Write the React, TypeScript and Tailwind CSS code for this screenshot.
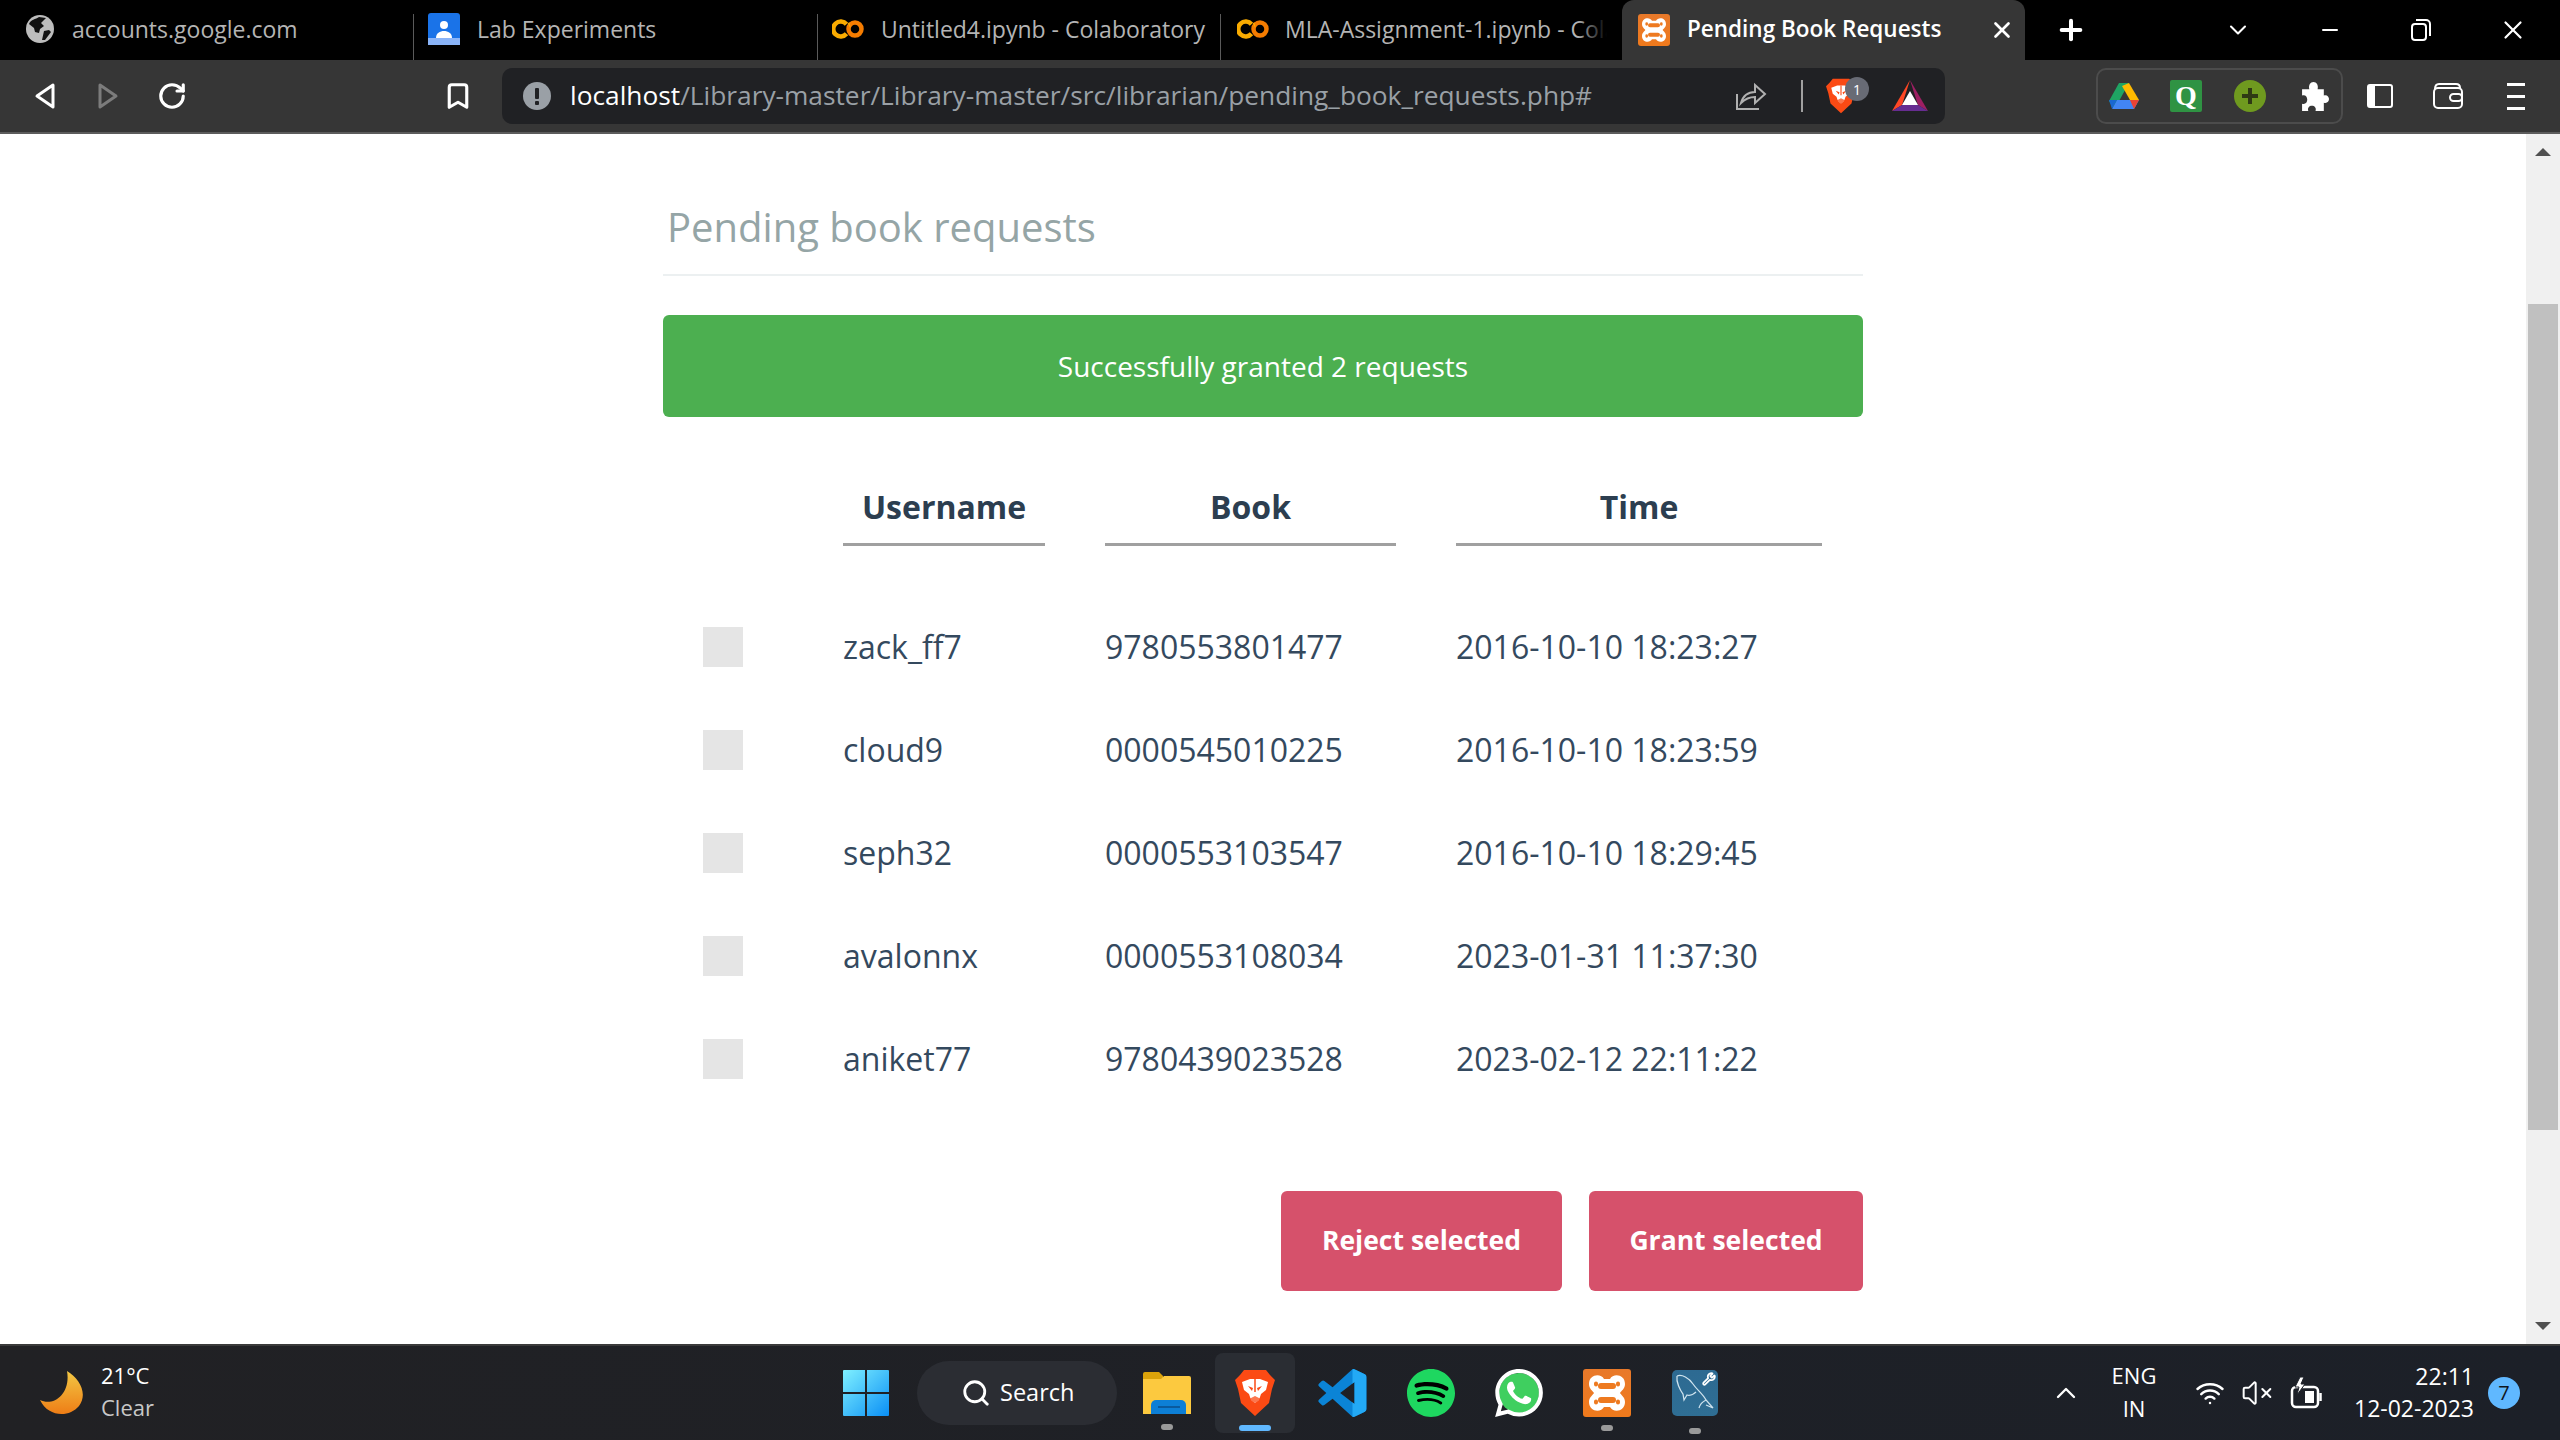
import { Bookmark, ChevronDown, ChevronUp, Minus, Plus, RotateCw, Search, VolumeX, Wifi, Wrench, X } from 'lucide-react';
import { SiSpotify, SiWhatsapp } from 'react-icons/si';

const requests = [
  { user: 'zack_ff7', book: '9780553801477', time: '2016-10-10 18:23:27' },
  { user: 'cloud9', book: '0000545010225', time: '2016-10-10 18:23:59' },
  { user: 'seph32', book: '0000553103547', time: '2016-10-10 18:29:45' },
  { user: 'avalonnx', book: '0000553108034', time: '2023-01-31 11:37:30' },
  { user: 'aniket77', book: '9780439023528', time: '2023-02-12 22:11:22' },
];

function ColabIcon() {
  return (
    <svg width="32" height="20" viewBox="0 0 32 20" fill="none" className="shrink-0">
      <circle cx="23" cy="10" r="6.5" stroke="#f57c00" strokeWidth="4.5" />
      <path d="M14.5 5.2A7.5 7.5 0 1 0 14.5 14.8" stroke="#f9ab00" strokeWidth="4.5" />
      <path d="M16.8 6.2A6.5 6.5 0 0 1 18 5.8" stroke="#f9ab00" strokeWidth="4.5" />
    </svg>
  );
}

function XamppTile({ size }: { size: number }) {
  return (
    <div
      className="shrink-0 rounded-[3px] bg-gradient-to-b from-[#e8792a] to-[#f07a1c]"
      style={{ width: size, height: size }}
    >
      <svg viewBox="0 0 48 48" className="w-full h-full" fill="none">
        <path
          d="M6 15C6 5 18 4 21 10H27C30 4 42 5 42 15C42 20 38 22 37 24C38 26 42 28 42 33C42 43 30 44 27 38H21C18 44 6 43 6 33C6 28 10 26 11 24C10 22 6 20 6 15Z"
          fill="#fff"
        />
        <path d="M18 17H30M18 31H30" stroke="#ee7a20" strokeWidth="6" strokeLinecap="round" />
        <path d="M13 14.5V15.5M35 14.5V15.5M13 32.5V33.5M35 32.5V33.5" stroke="#ee7a20" strokeWidth="4" strokeLinecap="round" />
      </svg>
    </div>
  );
}

function BraveIcon({ w, h }: { w: number; h: number }) {
  return (
    <div className="relative shrink-0" style={{ width: w, height: h }}>
      <svg viewBox="0 0 40 48" className="absolute inset-0 w-full h-full">
        <path d="M9 1h22l4 5 5 5-3 9-3 14-14 13L6 34 3 20 0 11l5-5z" fill="#fb4a14" />
        <path d="M7 13l8-3h10l8 3-2 8-5 4-2 6-4 3-4-3-2-6-5-4z" fill="#fff" />
        <path d="M13 17l5 2-1 3zM27 17l-5 2 1 3z" fill="#fb4a14" />
        <path d="M19 10h2v13h-2zM14 30l6-3 6 3-6 4z" fill="#fb4a14" opacity="0.75" />
      </svg>
    </div>
  );
}

function Tab({ icon, label, width }: { icon: React.ReactNode; label: string; width: string }) {
  return (
    <div className={`flex items-center h-full pb-[2px] overflow-hidden whitespace-nowrap text-[23px] text-[#b4b4b4] ${width}`}>
      {icon}
      <span>{label}</span>
    </div>
  );
}

function TabSeparator() {
  return <div className="w-px h-[46px] self-end bg-[#5a5a5a] shrink-0" />;
}

function TabStrip() {
  return (
    <div className="h-[60px] bg-black flex items-stretch shrink-0">
      <Tab
        width="w-[413px] pl-[26px]"
        label="accounts.google.com"
        icon={
          <svg width="28" height="28" viewBox="0 0 28 28" className="shrink-0 mr-[18px]">
            <circle cx="14" cy="14" r="14" fill="#bdbdbd" />
            <path d="M13 2c-3 2-9 3-10 7l5 4 1 4 4 1 1-4 4-3-3-3 5-5zM18 16l5-1 2 2-6 8-3 0z" fill="#111" />
          </svg>
        }
      />
      <TabSeparator />
      <Tab
        width="w-[403px] pl-[14px]"
        label="Lab Experiments"
        icon={
          <svg width="32" height="32" viewBox="0 0 32 32" className="shrink-0 mr-[17px]">
            <rect width="32" height="32" rx="3" fill="#1a73e8" />
            <rect y="25" width="32" height="7" fill="#8ab4f8" />
            <circle cx="16" cy="12" r="4" fill="#fff" />
            <path d="M8 25c0-5 4-7 8-7s8 2 8 7z" fill="#fff" />
          </svg>
        }
      />
      <TabSeparator />
      <Tab width="w-[402px] pl-[14px]" label="Untitled4.ipynb - Colaboratory" icon={<div className="mr-[17px]"><ColabIcon /></div>} />
      <TabSeparator />
      <div className="relative w-[401px] h-full">
        <Tab width="w-[386px] pl-[16px]" label="MLA-Assignment-1.ipynb - Colaboratory" icon={<div className="mr-[16px]"><ColabIcon /></div>} />
        <div className="absolute right-[15px] top-0 h-full w-[30px] bg-gradient-to-r from-transparent to-black" />
      </div>
      <div className="w-[403px] h-full bg-[#363636] rounded-t-[12px] flex items-center pl-[16px] whitespace-nowrap text-[22.5px] font-semibold text-white">
        <XamppTile size={32} />
        <span className="ml-[17px] pb-[2px]">Pending Book Requests</span>
        <X className="ml-auto mr-[10px] text-white" size={26} strokeWidth={2.5} />
      </div>
      <div className="flex-1 flex items-center text-white">
        <Plus className="ml-[30px]" size={32} strokeWidth={3} />
        <ChevronDown className="ml-[137px]" size={28} strokeWidth={1.75} />
        <Minus className="ml-[66px]" size={24} strokeWidth={2} />
        <svg width="24" height="24" viewBox="0 0 24 24" fill="none" stroke="#fff" strokeWidth="2" className="ml-[67px]">
          <rect x="3" y="6" width="14" height="16" rx="3" />
          <path d="M7 2h10a4 4 0 0 1 4 4v12" />
        </svg>
        <X className="ml-[65px]" size={30} strokeWidth={1.75} />
      </div>
    </div>
  );
}

function Toolbar() {
  return (
    <div className="h-[74px] bg-[#363636] border-b-2 border-[#5c5c5c] flex items-center shrink-0">
      <svg width="22" height="28" viewBox="0 0 22 28" fill="none" stroke="#fff" strokeWidth="3" strokeLinejoin="round" className="ml-[34px]">
        <path d="M19 3v22L3 14z" />
      </svg>
      <svg width="22" height="28" viewBox="0 0 22 28" fill="none" stroke="#7c7c7c" strokeWidth="3" strokeLinejoin="round" className="ml-[41px]">
        <path d="M3 3v22l16-11z" />
      </svg>
      <RotateCw className="ml-[38px] text-white" size={30} strokeWidth={2.5} />
      <Bookmark className="ml-[256px] text-white" size={30} strokeWidth={2.5} />
      <div className="ml-[29px] w-[1443px] h-[56px] rounded-[10px] bg-[#202124] flex items-center pl-[21px]">
        <svg width="28" height="28" viewBox="0 0 28 28" className="shrink-0">
          <circle cx="14" cy="14" r="14" fill="#9aa0a6" />
          <rect x="12" y="6" width="4" height="11" rx="1" fill="#202124" />
          <rect x="12" y="19" width="4" height="4" rx="1" fill="#202124" />
        </svg>
        <div className="ml-[19px] text-[26.3px] text-[#9aa0a6] whitespace-nowrap">
          <span className="text-white">localhost</span>/Library-master/Library-master/src/librarian/pending_book_requests.php#
        </div>
        <svg width="32" height="30" viewBox="0 0 32 30" fill="none" stroke="#b0b0b0" strokeWidth="2" className="ml-auto shrink-0">
          <path d="M2 13v15h22" />
          <path d="M6 22c2-7 7-11 14-11V4l10 9-10 9v-6c-6 0-10 2-14 6z" />
        </svg>
        <div className="ml-[34px] w-[2px] h-[32px] bg-[#a0a0a0] shrink-0" />
        <div className="relative ml-[23px] shrink-0">
          <BraveIcon w={30} h={36} />
          <div className="absolute left-[19px] top-[-1px] w-[24px] h-[24px] rounded-full bg-[#686b75] text-white text-[14px] flex items-center justify-center">1</div>
        </div>
        <svg width="36" height="32" viewBox="0 0 36 32" className="ml-[36px] mr-[17px] shrink-0">
          <path d="M18 0L0 31l10-6z" fill="#ff4724" />
          <path d="M18 0l18 31-10-6z" fill="#9e1f63" />
          <path d="M0 31h36l-10-6H10z" fill="#662d91" />
          <path d="M18 11L10 25h16z" fill="#fff" />
        </svg>
      </div>
      <div className="ml-[151px] w-[247px] h-[56px] rounded-[10px] border-2 border-[#4c4c4c] flex items-center shrink-0">
        <svg width="30" height="26" viewBox="0 0 30 26" className="ml-[11px]">
          <path d="M10 0h10L10 18 5 26 0 18z" fill="#1fa463" />
          <path d="M20 0l10 17h-9L13 3z" fill="#ffba00" />
          <path d="M8 17h22l-5 9H3z" fill="#4285f4" />
          <path d="M0 17h8l-5 9z" fill="#1967d2" />
          <path d="M21 17h9l-5 9z" fill="#ea4335" />
        </svg>
        <div className="ml-[31px] w-[32px] h-[32px] rounded-[2px] bg-[#2f9343] text-white text-[28px] font-bold flex items-center justify-center" style={{ fontFamily: 'Liberation Serif, serif' }}>Q</div>
        <svg width="32" height="32" viewBox="0 0 32 32" className="ml-[32px]">
          <circle cx="16" cy="16" r="16" fill="#6f9a1f" />
          <path d="M14 8h4v6h6v4h-6v6h-4v-6H8v-4h6z" fill="#2f3a14" />
        </svg>
        <svg width="29" height="29" viewBox="0 0 28 28" className="ml-[34px]">
          <path d="M2 7H9C8 3 10 0 13 0S18 3 17 7H23V13C26 12 28 14 28 16.5S26 21 23 20V28H15C16 25 14 23 11.5 23S7 25 8 28H2V21C5 22 7 20 7 17S5 12 2 13Z" fill="#fff" />
        </svg>
      </div>
      <svg width="26" height="24" viewBox="0 0 26 24" fill="none" className="ml-[24px] shrink-0">
        <rect x="1" y="1" width="24" height="22" rx="2" stroke="#fff" strokeWidth="2" />
        <rect x="1" y="1" width="7" height="22" fill="#fff" />
      </svg>
      <svg width="30" height="26" viewBox="0 0 30 26" fill="none" stroke="#fff" strokeWidth="2" className="ml-[40px] shrink-0">
        <path d="M2 6c0-3 1-5 4-5h17c3 0 4 1 4 4" />
        <rect x="1" y="5" width="28" height="20" rx="4" />
        <rect x="17" y="11" width="12" height="7" rx="3.5" />
      </svg>
      <div className="ml-[44px] flex flex-col gap-[9px] shrink-0">
        <div className="w-[18px] h-[3px] bg-white" />
        <div className="w-[18px] h-[3px] bg-white" />
        <div className="w-[18px] h-[3px] bg-white" />
      </div>
    </div>
  );
}

function Scrollbar() {
  return (
    <div className="w-[34px] bg-[#f0f0f0] flex flex-col items-center shrink-0">
      <div className="mt-[14px] w-0 h-0 border-x-[8px] border-x-transparent border-b-[8px] border-b-[#505050]" />
      <div className="mt-[148px] w-[30px] h-[826px] bg-[#c0c0c0]" />
      <div className="mt-[192px] w-0 h-0 border-x-[8px] border-x-transparent border-t-[8px] border-t-[#505050]" />
    </div>
  );
}

function RequestsPage() {
  return (
    <div className="flex-1 bg-white flex min-h-0" style={{ fontFamily: '"Open Sans", sans-serif' }}>
      <main className="flex-1 min-w-0">
        <div className="w-[1200px] mx-auto pt-[65px]">
          <h1 className="pl-[4px] pb-[19px] border-b-2 border-[#ecf0f1] text-[40px] leading-[56px] font-normal text-[#95a5a6]">
            Pending book requests
          </h1>

          <div className="mt-[39px] h-[102px] rounded-[6px] bg-[#4caf50] flex items-center justify-center text-[28px] text-white">
            Successfully granted 2 requests
          </div>

          <div className="mt-[62px] grid grid-cols-[120px_202px_291px_366px] gap-x-[60px] text-[32px] text-[#34495e]">
            <div />
            <div className="pb-[8px] border-b-[3px] border-[#a0a0a0] text-center font-bold text-[#2c3e50] leading-[56px]">Username</div>
            <div className="pb-[8px] border-b-[3px] border-[#a0a0a0] text-center font-bold text-[#2c3e50] leading-[56px]">Book</div>
            <div className="pb-[8px] border-b-[3px] border-[#a0a0a0] text-center font-bold text-[#2c3e50] leading-[56px]">Time</div>
            <div className="col-span-4 h-[49px]" />
            {requests.map((r) => (
              <div key={r.user} className="contents">
                <div className="h-[103px] flex items-center">
                  <div className="ml-[40px] w-[40px] h-[40px] bg-[#e5e5e5]" />
                </div>
                <div className="h-[103px] flex items-center">{r.user}</div>
                <div className="h-[103px] flex items-center">{r.book}</div>
                <div className="h-[103px] flex items-center">{r.time}</div>
              </div>
            ))}
          </div>

          <div className="mt-[81px] flex justify-end gap-[27px]">
            <button className="w-[281px] h-[100px] rounded-[6px] bg-[#d6516b] text-white text-[26.5px] font-bold">Reject selected</button>
            <button className="w-[274px] h-[100px] rounded-[6px] bg-[#d6516b] text-white text-[26.5px] font-bold">Grant selected</button>
          </div>
        </div>
      </main>
      <Scrollbar />
    </div>
  );
}

function Dot() {
  return <div className="w-[12px] h-[6px] rounded-full bg-[#9a9a9a]" />;
}

function Taskbar() {
  return (
    <div className="h-[96px] shrink-0 border-t-2 border-[#3a3a3a] bg-gradient-to-r from-[#212124] to-[#1c2028] flex items-center text-white text-[22px]" style={{ fontFamily: '"Open Sans", sans-serif' }}>
      <svg width="44" height="44" viewBox="0 0 44 44" className="ml-[40px] shrink-0">
        <defs>
          <linearGradient id="moon" x1="0" y1="0" x2="0" y2="1">
            <stop offset="0" stopColor="#f3c844" />
            <stop offset="1" stopColor="#ee7d16" />
          </linearGradient>
        </defs>
        <path d="M27 0c13 8 21 23 12 35C29 47 8 46 0 29c14 7 31-7 27-29z" fill="url(#moon)" />
      </svg>
      <div className="ml-[17px] w-[100px] -mt-[4px] leading-[32px] shrink-0">
        <div>21°C</div>
        <div className="text-[#c8c8c8]">Clear</div>
      </div>
      <svg width="46" height="46" viewBox="0 0 46 46" className="ml-[642px] shrink-0">
        <defs>
          <linearGradient id="win" x1="0" y1="0" x2="1" y2="1">
            <stop offset="0" stopColor="#7ff0ff" />
            <stop offset="1" stopColor="#0a8ff5" />
          </linearGradient>
        </defs>
        <path d="M0 1a1 1 0 0 1 1-1h21v22H0zM24 0h21a1 1 0 0 1 1 1v21H24zM0 24h22v22H1a1 1 0 0 1-1-1zM24 24h22v21a1 1 0 0 1-1 1H24z" fill="url(#win)" />
      </svg>
      <div className="ml-[28px] w-[200px] h-[64px] rounded-full bg-[#2b2d33] flex items-center pl-[44px] shrink-0 text-[23.5px]">
        <Search size={30} strokeWidth={2.25} className="shrink-0" />
        <span className="ml-[9px]">Search</span>
      </div>
      <div className="relative ml-[26px] w-[48px] h-[42px] shrink-0">
        <svg width="48" height="42" viewBox="0 0 48 42" className="absolute inset-0">
          <path d="M0 2a2 2 0 0 1 2-2h14l4 4v6H0z" fill="#dba30b" />
          <path d="M0 7l18 0 3-3h25a2 2 0 0 1 2 2v36H0z" fill="#fcc93f" />
          <path d="M8 42V33a5 5 0 0 1 5-5h25a5 5 0 0 1 5 5v9z" fill="#0d7fd6" />
          <rect x="15" y="34" width="22" height="2" fill="#0a5a9e" />
        </svg>
        <div className="absolute left-[18px] top-[52px]"><Dot /></div>
      </div>
      <div className="ml-[24px] w-[80px] h-[80px] rounded-[8px] bg-[#2a2d33] flex flex-col items-center shrink-0">
        <div className="mt-[16px]"><BraveIcon w={40} h={48} /></div>
        <div className="mt-[8px] w-[32px] h-[6px] rounded-full bg-[#60b8ff]" />
      </div>
      <svg width="49" height="48" viewBox="0 0 24 24" className="ml-[23px] shrink-0">
        <defs>
          <clipPath id="codeRight"><rect x="17" y="0" width="7" height="24" /></clipPath>
        </defs>
        <path d="M23.15 2.587 18.21.21a1.494 1.494 0 0 0-1.705.29l-9.46 8.63-4.12-3.128a.999.999 0 0 0-1.276.057L.327 7.261A1 1 0 0 0 .326 8.74L3.899 12 .326 15.26a1 1 0 0 0 .001 1.479L1.65 17.94a.999.999 0 0 0 1.276.057l4.12-3.128 9.46 8.63a1.492 1.492 0 0 0 1.704.29l4.942-2.377A1.5 1.5 0 0 0 24 20.06V3.939a1.5 1.5 0 0 0-.85-1.352zm-5.146 14.861L10.826 12l7.178-5.448v10.896z" fill="#0b84d6" />
        <path d="M23.15 2.587 18.21.21a1.494 1.494 0 0 0-1.705.29l-9.46 8.63-4.12-3.128a.999.999 0 0 0-1.276.057L.327 7.261A1 1 0 0 0 .326 8.74L3.899 12 .326 15.26a1 1 0 0 0 .001 1.479L1.65 17.94a.999.999 0 0 0 1.276.057l4.12-3.128 9.46 8.63a1.492 1.492 0 0 0 1.704.29l4.942-2.377A1.5 1.5 0 0 0 24 20.06V3.939a1.5 1.5 0 0 0-.85-1.352zm-5.146 14.861L10.826 12l7.178-5.448v10.896z" fill="#23a9f5" clipPath="url(#codeRight)" />
      </svg>
      <div className="relative ml-[40px] w-[48px] h-[48px] shrink-0">
        <div className="absolute inset-[6px] rounded-full bg-black" />
        <SiSpotify className="absolute inset-0" color="#1ed760" size={48} />
      </div>
      <div className="relative ml-[40px] w-[48px] h-[48px] shrink-0">
        <div className="absolute inset-[4px] rounded-full bg-[#3fcf5f]" />
        <SiWhatsapp className="absolute inset-0" color="#fff" size={48} />
      </div>
      <div className="relative ml-[40px] shrink-0">
        <XamppTile size={48} />
        <div className="absolute left-[18px] top-[56px]"><Dot /></div>
      </div>
      <div className="relative ml-[41px] w-[46px] h-[46px] rounded-[5px] bg-gradient-to-b from-[#2d6a92] to-[#2f6e94] shrink-0">
        <svg width="46" height="46" viewBox="0 0 46 46" fill="none" stroke="#cfe3ee" strokeWidth="1.25" className="absolute inset-0">
          <path d="M5 6C10 4 17 8 21 14C25 20 31 24 34 30L41 38L34 35" />
          <path d="M5 6C4 12 8 20 11 24L12 30L15 25C18 26 22 24 24 22" />
          <path d="M34 30C30 32 28 34 27 38" />
        </svg>
        <Wrench className="absolute right-[2px] top-[2px] text-white" size={14} strokeWidth={3} />
        <div className="absolute left-[17px] top-[58px]"><Dot /></div>
      </div>
      <ChevronUp className="ml-[332px] shrink-0" size={32} strokeWidth={1.75} />
      <div className="ml-[27px] w-[50px] -mt-[3px] text-center leading-[33px] shrink-0">
        <div>ENG</div>
        <div>IN</div>
      </div>
      <Wifi className="ml-[36px] shrink-0" size={30} strokeWidth={2} />
      <VolumeX className="ml-[16px] shrink-0" size={32} strokeWidth={1.5} />
      <svg width="32" height="32" viewBox="0 0 32 32" fill="none" stroke="#fff" strokeWidth="2.5" className="ml-[17px] shrink-0">
        <rect x="2" y="10" width="26" height="20" rx="4" />
        <path d="M30.5 16v8" />
        <rect x="15" y="14" width="9" height="12" fill="#fff" stroke="none" />
        <path d="M10 0L5 10h4l-2 8 8-11h-4l3-7z" fill="#fff" stroke="#1c2028" strokeWidth="1" />
      </svg>
      <div className="ml-auto -mt-[3px] text-right text-[23px] leading-[32px] shrink-0">
        <div>22:11</div>
        <div>12-02-2023</div>
      </div>
      <div className="ml-[14px] mr-[40px] w-[32px] h-[32px] rounded-full bg-[#60b8ff] text-[#10161d] text-[20px] flex items-center justify-center shrink-0">7</div>
    </div>
  );
}

export default function App() {
  return (
    <div className="w-full h-screen flex flex-col overflow-hidden" style={{ fontFamily: '"Open Sans", sans-serif' }}>
      <TabStrip />
      <Toolbar />
      <RequestsPage />
      <Taskbar />
    </div>
  );
}
